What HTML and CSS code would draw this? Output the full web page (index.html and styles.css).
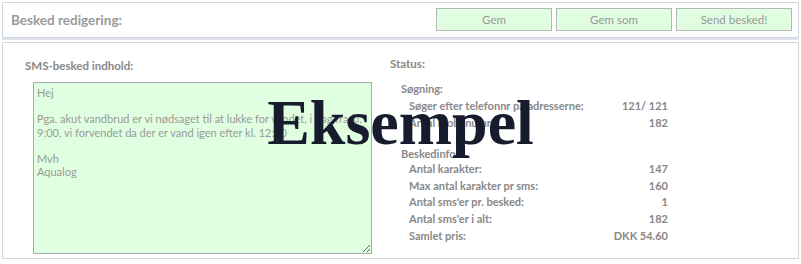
FILE: index.html
```html
<!DOCTYPE html>
<html lang="da">
<head>
    <meta charset="UTF-8">
    <meta name="viewport" content="width=device-width, initial-scale=1.0">
    <title>Besked redigering</title>
    <link rel="stylesheet" href="styles.css">
</head>
<body>
    <div class="panel toolbar">
        <h1>Besked redigering:</h1>
        <div class="button-container">
            <button class="green-button">Gem</button>
            <button class="green-button">Gem som</button>
            <button class="green-button">Send besked!</button>
        </div>
    </div>

    <div class="panel editor">
        <div class="message-col">
            <h2>SMS-besked indhold:</h2>
            <textarea class="message-box" readonly>Hej

Pga. akut vandbrud er vi nødsaget til at lukke for vandet, i dag fra kl. 9:00, vi forvendet da der er vand igen efter kl. 12:00

Mvh
Aqualog</textarea>
        </div>
        <div class="status-col">
            <h2>Status:</h2>
            <h3 class="first">Søgning:</h3>
            <div class="stat-row"><span>Søger efter telefonnr på adresserne:</span><span>121/ 121</span></div>
            <div class="stat-row"><span>Antal mobilnumre:</span><span>182</span></div>
            <h3 class="second">Beskedinfo:</h3>
            <div class="stat-row"><span>Antal karakter:</span><span>147</span></div>
            <div class="stat-row"><span>Max antal karakter pr sms:</span><span>160</span></div>
            <div class="stat-row"><span>Antal sms'er pr. besked:</span><span>1</span></div>
            <div class="stat-row"><span>Antal sms'er i alt:</span><span>182</span></div>
            <div class="stat-row"><span>Samlet pris:</span><span>DKK 54.60</span></div>
        </div>
    </div>

    <div class="watermark">Eksempel</div>
</body>
</html>
```

FILE: styles.css
```css
body {
    font-family: Lato, "Open Sans", sans-serif;
    margin: 0;
    padding: 2px 2px 0 2px;
    background-color: #ffffff;
    color: #8c8c8c;
    position: relative;
}
.panel {
    background-color: #fff;
    border: 1px solid #cfd6df;
    box-shadow: 0 2px 0 #dfe4ea;
}
.toolbar {
    display: flex;
    justify-content: space-between;
    align-items: center;
    height: 36px;
    box-sizing: border-box;
    padding: 0 6px 0 8px;
}
.toolbar h1 {
    margin: 0;
    font-size: 13.5px;
    font-weight: bold;
    color: #9a9a9a;
}
.button-container {
    display: flex;
    gap: 4px;
    margin-top: -1px;
}
.green-button {
    width: 116px;
    height: 23px;
    background-color: #e0fde0;
    border: 1px solid #b4b8b4;
    color: #999;
    font-family: Lato, sans-serif;
    font-size: 11.5px;
    padding: 0;
    cursor: pointer;
}
.editor {
    margin-top: 4px;
    height: 217px;
    box-sizing: border-box;
    display: grid;
    grid-template-columns: 386px 1fr;
}
.message-col {
    padding: 16px 0 0 22px;
}
.message-col h2,
.status-col h2 {
    margin: 0;
    font-size: 11.5px;
    line-height: 14px;
    font-weight: bold;
    color: #888;
}
.message-box {
    display: block;
    margin: 9px 0 0 8px;
    width: 339px;
    height: 172px;
    box-sizing: border-box;
    background-color: #e0ffe0;
    border: 1px solid #aaaaaa;
    padding: 3px 3px;
    font-family: Lato, sans-serif;
    font-size: 11px;
    line-height: 13.2px;
    color: #999;
    resize: both;
    outline: none;
}
.status-col {
    padding: 14px 0 0 1px;
}
.status-col h3 {
    margin: 0 0 0 11px;
    font-size: 11px;
    line-height: 14px;
    font-weight: bold;
    color: #888;
}
.status-col h3.first {
    margin-top: 11px;
    margin-bottom: 2px;
}
.status-col h3.second {
    margin-top: 15.6px;
}
.stat-row {
    display: flex;
    justify-content: space-between;
    width: 259px;
    margin-left: 19px;
    height: 16.7px;
    line-height: 16.7px;
    font-size: 11px;
    font-weight: bold;
    color: #888;
}
.watermark {
    position: absolute;
    left: 0;
    right: 0;
    top: 91px;
    text-align: center;
    font-family: "Liberation Serif", "Times New Roman", serif;
    font-weight: bold;
    font-size: 64px;
    line-height: 1;
    color: #161b2d;
    pointer-events: none;
}
```
